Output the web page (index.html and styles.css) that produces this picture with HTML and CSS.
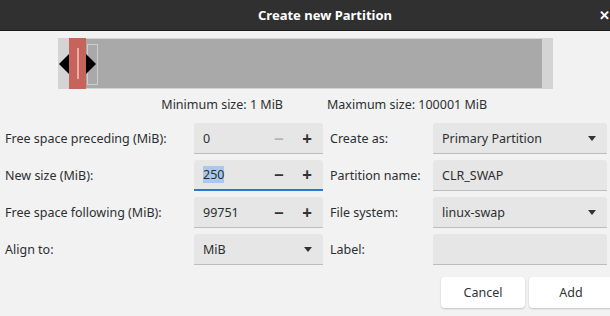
FILE: index.html
```html
<!DOCTYPE html>
<html lang="en">
<head>
    <meta charset="UTF-8">
    <title>Create new Partition</title>
    <link rel="stylesheet" href="styles.css">
</head>
<body>
    <div class="titlebar">
        <span class="title">Create new Partition</span>
        <span class="close">✕</span>
    </div>

    <div class="bar-wrap">
        <svg class="part-bar" width="495" height="51" viewBox="0 0 495 51">
            <rect x="0" y="0" width="495" height="51" fill="#d4d4d4"/>
            <rect x="28" y="1" width="456" height="49" fill="#a9a9a9"/>
            <rect x="11" y="0" width="17" height="51" fill="#c6635a"/>
            <rect x="19" y="10" width="2" height="31" fill="#e9aca5"/>
            <rect x="29.5" y="6.5" width="10" height="40" fill="none" stroke="#cdcdcd"/>
            <polygon points="1,26 11,16 11,36" fill="#000"/>
            <polygon points="38,26 28,16 28,36" fill="#000"/>
        </svg>
    </div>

    <div class="limits">
        <span class="min">Minimum size: 1 MiB</span>
        <span class="max">Maximum size: 100001 MiB</span>
    </div>

    <div class="form">
        <label>Free space preceding (MiB):</label>
        <div class="field">
            <span class="value">0</span>
            <span class="spin disabled">−</span>
            <span class="spin">+</span>
        </div>
        <label class="right">Create as:</label>
        <div class="field">
            <span class="value">Primary Partition</span>
            <span class="caret"></span>
        </div>

        <label>New size (MiB):</label>
        <div class="field focused">
            <span class="value"><span class="selected">250</span></span>
            <span class="spin">−</span>
            <span class="spin">+</span>
        </div>
        <label class="right">Partition name:</label>
        <div class="field">
            <span class="value">CLR_SWAP</span>
        </div>

        <label>Free space following (MiB):</label>
        <div class="field">
            <span class="value">99751</span>
            <span class="spin">−</span>
            <span class="spin">+</span>
        </div>
        <label class="right">File system:</label>
        <div class="field">
            <span class="value">linux-swap</span>
            <span class="caret"></span>
        </div>

        <label>Align to:</label>
        <div class="field">
            <span class="value">MiB</span>
            <span class="caret"></span>
        </div>
        <label class="right">Label:</label>
        <div class="field">
            <span class="value"></span>
        </div>
    </div>

    <div class="actions">
        <button>Cancel</button>
        <button>Add</button>
    </div>
</body>
</html>
```

FILE: styles.css
```css
body {
    margin: 0;
    width: 610px;
    height: 316px;
    overflow: hidden;
    font-family: "Noto Sans", sans-serif;
    font-size: 12.5px;
    color: #2b2f31;
    background-color: #f2f2f2;
}

.titlebar {
    height: 31px;
    background-color: #303030;
    border-bottom: 1px solid #1c1c1c;
    box-sizing: border-box;
    display: flex;
    align-items: center;
    color: #fff;
}

.title {
    font-weight: bold;
    font-size: 13px;
    margin-left: 258px;
}

.close {
    margin-left: auto;
    margin-right: 0;
    font-size: 13px;
    font-weight: bold;
}

.bar-wrap {
    display: flex;
    justify-content: center;
    padding-top: 7px;
    margin-left: 1px;
}

.part-bar {
    display: block;
}

.limits {
    display: flex;
    margin-top: 5px;
    height: 20px;
    align-items: center;
}

.limits .min {
    width: 283px;
    text-align: right;
}

.limits .max {
    margin-left: 44px;
}

.form {
    display: grid;
    grid-template-columns: 189px 129px 110px 174px;
    grid-auto-rows: 31px;
    row-gap: 6px;
    padding-left: 5px;
    margin-top: 9px;
}

.form label {
    display: flex;
    align-items: center;
}

.form label.right {
    padding-left: 7px;
}

.field {
    display: flex;
    align-items: center;
    background-color: #e6e6e6;
    border-bottom: 1px solid #bdbdbd;
    border-radius: 3px 3px 0 0;
    padding: 0 9px;
    box-sizing: border-box;
}

.field.focused {
    border-bottom: 2px solid #2a76d6;
}

.value {
    flex: 1;
}

.selected {
    background-color: #a9c8ec;
}

.spin {
    width: 28px;
    text-align: center;
    font-size: 17px;
    font-weight: bold;
    color: #333;
}

.spin:last-child {
    margin-right: -7px;
}

.spin.disabled {
    color: #b5b5b5;
}

.caret {
    width: 0;
    height: 0;
    border-left: 4px solid transparent;
    border-right: 4px solid transparent;
    border-top: 5px solid #2e3436;
    margin-right: 2px;
}

.actions {
    display: flex;
    gap: 4px;
    padding-left: 441px;
    margin-top: 12px;
}

button {
    flex: none;
    width: 84px;
    height: 31px;
    border: none;
    border-radius: 4px;
    background-color: #fff;
    box-shadow: 0 1px 2px rgba(0, 0, 0, 0.2);
    font-family: "Noto Sans", sans-serif;
    font-size: 12.5px;
    color: #2e3436;
}
```
